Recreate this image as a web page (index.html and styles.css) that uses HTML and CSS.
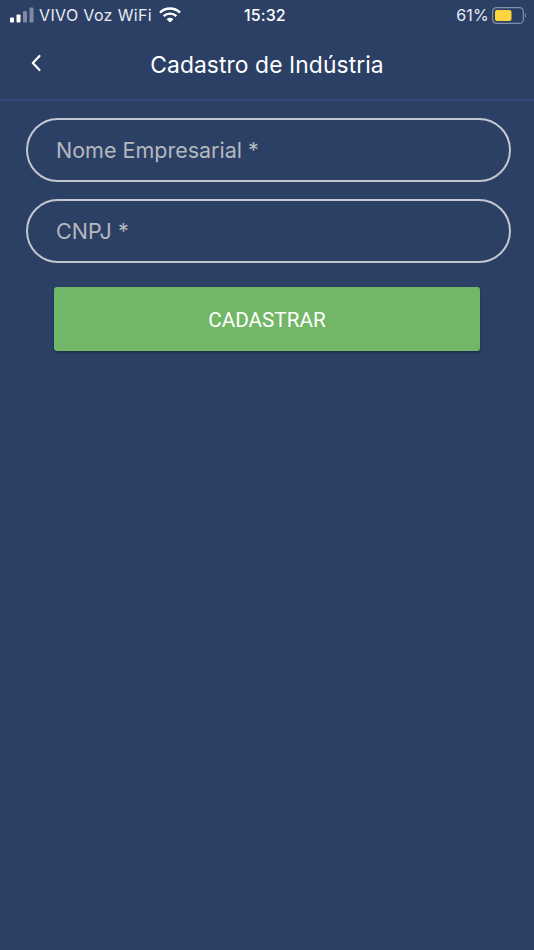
FILE: index.html
```html
<!DOCTYPE html>
<html lang="pt">
<head>
<meta charset="utf-8">
<title>Cadastro de Indústria</title>
<link rel="stylesheet" href="styles.css">
</head>
<body>
<div class="status">
  <div class="status-left">
    <svg class="signal" width="24" height="16" viewBox="0 0 24 16">
      <rect x="0" y="10.5" width="4" height="5" rx="1" fill="#fff"/>
      <rect x="6.5" y="7.5" width="4" height="8" rx="1" fill="#fff"/>
      <rect x="13" y="4" width="4" height="11.5" rx="1" fill="#7d8aa3"/>
      <rect x="19.5" y="0.5" width="4" height="15" rx="1" fill="#7d8aa3"/>
    </svg>
    <span class="carrier">VIVO Voz WiFi</span>
    <svg class="wifi" width="22" height="16" viewBox="0 0 22 16">
      <path d="M1 5.6a14.4 14.4 0 0 1 20 0" fill="none" stroke="#fff" stroke-width="2.4"/>
      <path d="M4.6 9.2a9.3 9.3 0 0 1 12.8 0" fill="none" stroke="#fff" stroke-width="2.4"/>
      <path d="M11 15.6 7.6 12.2a4.9 4.9 0 0 1 6.8 0z" fill="#fff"/>
    </svg>
  </div>
  <span class="clock">15:32</span>
  <div class="status-right">
    <span class="percent">61%</span>
    <svg class="battery" width="35" height="17" viewBox="0 0 35 17">
      <rect x="0.6" y="0.6" width="30.8" height="15.8" rx="4" fill="none" stroke="#8490a8" stroke-width="1.2"/>
      <rect x="3" y="3" width="16.5" height="11" rx="2" fill="#fbd63e"/>
      <path d="M33 6v5a2.6 2.6 0 0 0 1-2.5 2.6 2.6 0 0 0-1-2.500z" fill="#8490a8"/>
    </svg>
  </div>
</div>
<header class="topbar">
  <svg class="back" width="12" height="18" viewBox="0 0 12 18">
    <path d="M9.500 2 2.800 9l6.700 7" fill="none" stroke="#fff" stroke-width="2.200" stroke-linecap="round" stroke-linejoin="round"/>
  </svg>
  <h1 class="title">Cadastro de Indústria</h1>
</header>
<main class="form">
  <div class="field"><span class="placeholder">Nome Empresarial *</span></div>
  <div class="field"><span class="placeholder">CNPJ *</span></div>
  <button class="submit" type="button">CADASTRAR</button>
</main>
</body>
</html>
```
FILE: styles.css
```css
html, body {
  margin: 0;
  padding: 0;
}
body {
  width: 534px;
  height: 950px;
  overflow: hidden;
  background: #2c4066;
  font-family: Roboto, "Liberation Sans", sans-serif;
  color: #fff;
}
.status {
  height: 30px;
  display: flex;
  align-items: center;
  justify-content: space-between;
  padding: 0 7px 0 10px;
  position: relative;
  font-family: Inter, Roboto, sans-serif;
  font-size: 16px;
  color: #e9ecf1;
}
.status-left {
  display: flex;
  align-items: center;
  gap: 5px;
}
.carrier {
  letter-spacing: 0.35px;
}
.wifi {
  margin-left: 2px;
}
.clock {
  position: absolute;
  left: 244px;
  top: 5px;
  font-weight: 500;
  letter-spacing: 0.1px;
  color: #fff;
}
.status-right {
  display: flex;
  align-items: center;
  gap: 3px;
}
.percent {
  letter-spacing: 0.2px;
}
.topbar {
  height: 71px;
  box-sizing: border-box;
  border-bottom: 2px solid #35487f;
  display: flex;
  align-items: center;
  justify-content: center;
  position: relative;
}
.back {
  position: absolute;
  left: 30px;
  top: 24px;
}
.title {
  margin: 0;
  font-family: Inter, Roboto, sans-serif;
  font-size: 22.8px;
  font-weight: 400;
  letter-spacing: 0.1px;
}
.form {
  display: flex;
  flex-direction: column;
  padding: 17px 23px 0 26px;
  gap: 17px;
}
.field {
  height: 64px;
  box-sizing: border-box;
  border: 2px solid #c3c7d0;
  border-radius: 32px;
  padding-left: 28px;
  display: flex;
  align-items: center;
}
.placeholder {
  font-family: Inter, Roboto, sans-serif;
  font-size: 21.5px;
  color: #b5b8bd;
}
.submit {
  align-self: flex-start;
  margin: 7px 0 0 28px;
  width: 426px;
  height: 64px;
  padding: 2px 0 0;
  border: 0;
  border-radius: 3px;
  background: #72b668;
  color: #fff;
  font-family: Roboto, sans-serif;
  font-size: 20.7px;
  box-shadow: 0 2px 3px rgba(0, 0, 0, 0.3);
}
```
